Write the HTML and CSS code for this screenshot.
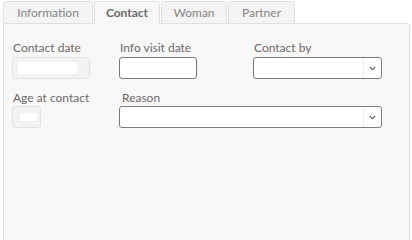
FILE: index.html
```html
<!DOCTYPE html>
<html>
<head>
<meta charset="utf-8">
<link rel="stylesheet" href="styles.css">
</head>
<body>
<div class="wrap">
  <div class="tabs">
    <div class="tab tab-info">Information</div>
    <div class="tab tab-active tab-contact">Contact</div>
    <div class="tab tab-woman">Woman</div>
    <div class="tab tab-partner">Partner</div>
  </div>
  <div class="panel">
    <div class="form">
      <div class="field f-cdate">
        <div class="label">Contact date</div>
        <div class="input disabled wide"><span class="fill fill-wide"></span></div>
      </div>
      <div class="field f-visit">
        <div class="label">Info visit date</div>
        <div class="input enabled"></div>
      </div>
      <div class="field f-by">
        <div class="label">Contact by</div>
        <div class="select"><span class="sel-val"></span><span class="sel-arrow"><svg width="7" height="5" viewBox="0 0 7 5"><path d="M0.8 1 L3.5 3.7 L6.2 1" fill="none" stroke="#666" stroke-width="1.1"/></svg></span></div>
      </div>
      <div class="field f-age">
        <div class="label">Age at contact</div>
        <div class="input disabled small"><span class="fill fill-small"></span></div>
      </div>
      <div class="field f-reason">
        <div class="label label-reason">Reason</div>
        <div class="select"><span class="sel-val"></span><span class="sel-arrow"><svg width="7" height="5" viewBox="0 0 7 5"><path d="M0.8 1 L3.5 3.7 L6.2 1" fill="none" stroke="#666" stroke-width="1.1"/></svg></span></div>
      </div>
    </div>
  </div>
</div>
</body>
</html>
```

FILE: styles.css
```css
html, body {
  margin: 0;
  padding: 0;
  background: #ffffff;
  overflow: hidden;
}
body {
  font-family: "Lato", "Open Sans", sans-serif;
  font-size: 12px;
  color: #6b6666;
}
.wrap {
  box-sizing: border-box;
  padding: 1px 2px 0 3px;
  height: 240px;
  display: flex;
  flex-direction: column;
}
.tabs {
  display: flex;
  height: 22px;
  position: relative;
  z-index: 1;
}
.tab {
  box-sizing: border-box;
  height: 22px;
  border: 1px solid #e0e0e0;
  border-bottom: none;
  border-radius: 4px 4px 0 0;
  background: #f4f4f4;
  color: #858585;
  font-size: 12px;
  line-height: 21px;
  text-align: center;
  margin-right: 1px;
}
.tab-info { width: 90px; margin-right: 1px; }
.tab-contact { width: 66px; }
.tab-woman { width: 66px; }
.tab-partner { width: 67px; }
.tab-active {
  background: #f8f8f8;
  color: #6a6a6a;
  font-weight: bold;
  height: 23px;
  border-color: #e0e0e0;
}
.panel {
  flex: 1;
  box-sizing: border-box;
  border: 1px solid #e0e0e0;
  border-bottom: none;
  border-radius: 0 4px 0 0;
  background: #f8f8f8;
  padding: 16px 0 0 8px;
}
.form {
  display: grid;
  grid-template-columns: 107px 134px 129px;
  row-gap: 11px;
}
.f-reason {
  grid-column: 2 / span 2;
}
.label {
  line-height: 16px;
  height: 16px;
  padding-left: 1px;
  margin-bottom: 1px;
  color: #6e6868;
  font-size: 12px;
}
.f-age .label, .f-reason .label { margin-bottom: 0; }
.label-reason { padding-left: 3px; }
.input {
  box-sizing: border-box;
  height: 22px;
  border-radius: 3px;
}
.enabled {
  width: 78px;
  background: #ffffff;
  border: 1px solid #7a7a7a;
}
.disabled {
  background: #f2f2f2;
  border: 1px solid #e2e2e2;
  display: flex;
  align-items: center;
}
.wide { width: 78px; padding-left: 5px; }
.small { width: 29px; padding-left: 7px; }
.fill { display: block; background: #ffffff; height: 12px; }
.fill-wide { width: 59px; }
.fill-small { width: 17px; height: 8px; }
.select {
  box-sizing: border-box;
  height: 22px;
  display: flex;
  background: #ffffff;
  border: 1px solid #7a7a7a;
  border-radius: 3px;
}
.sel-val { flex: 1; }
.sel-arrow {
  width: 17px;
  border-left: 1px solid #ececec;
  display: flex;
  align-items: center;
  justify-content: center;
}
.sel-arrow svg { display: block; }
```
